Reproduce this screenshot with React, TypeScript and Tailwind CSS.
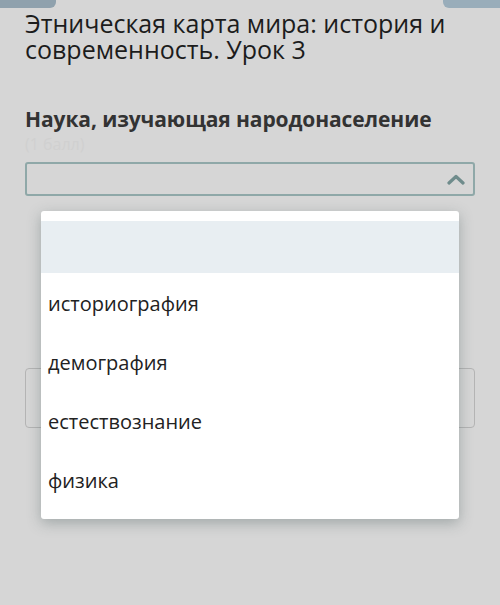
import React from 'react';

const options = ['историография', 'демография', 'естествознание', 'физика'];

const ChevronUp = () => (
  <svg width="18" height="11" viewBox="0 0 18 11" fill="none">
    <path d="M2 9 L9 2.5 L16 9" stroke="#6f8c8c" strokeWidth="3.2" strokeLinecap="round" strokeLinejoin="round" />
  </svg>
);

export default function App() {
  return (
    <div
      className="relative w-[500px] h-[605px] overflow-hidden bg-[#d6d6d6]"
      style={{ fontFamily: '"Open Sans", "Noto Sans", sans-serif' }}
    >
      {/* top buttons */}
      <div className="flex justify-between h-[8px]">
        <div className="w-[56px] h-full bg-[#8fa1ad] rounded-br-[6px]" />
        <div className="w-[57px] h-full bg-[#99adba] rounded-bl-[6px]" />
      </div>

      <div className="px-[25px]">
        <h1 className="mt-[2px] text-[25px] leading-[26px] text-[#1c1c1c] font-normal">
          Этническая карта мира: история и современность. Урок 3
        </h1>

        <h2 className="mt-[45px] text-[21px] leading-[25px] font-bold text-[#333333] tracking-[-0.1px]">
          Наука, изучающая народонаселение
        </h2>
        <div className="text-[16px] leading-[24px] text-[#d0d0d0]">(1 балл)</div>

        {/* select */}
        <div className="mt-[6px] h-[34px] border-2 border-[#8fa8a8] rounded-[3px] flex items-center justify-end pr-[8px]">
          <ChevronUp />
        </div>

        {/* content behind the dropdown */}
        <div className="mt-[172px] h-[60px] border border-[#b4b4b4] rounded-[4px]" />
      </div>

      {/* dropdown menu */}
      <div className="absolute left-[41px] top-[211px] w-[418px] h-[308px] bg-white rounded-[3px] shadow-[0_4px_14px_rgba(60,80,80,0.35)] pt-[10px]">
        <div className="h-[52px] bg-[#e8eef2]" />
        {options.map((o) => (
          <div key={o} className="h-[59px] flex items-center px-[7px] pt-[3px] text-[20px] text-[#222222]">
            {o}
          </div>
        ))}
      </div>
    </div>
  );
}
